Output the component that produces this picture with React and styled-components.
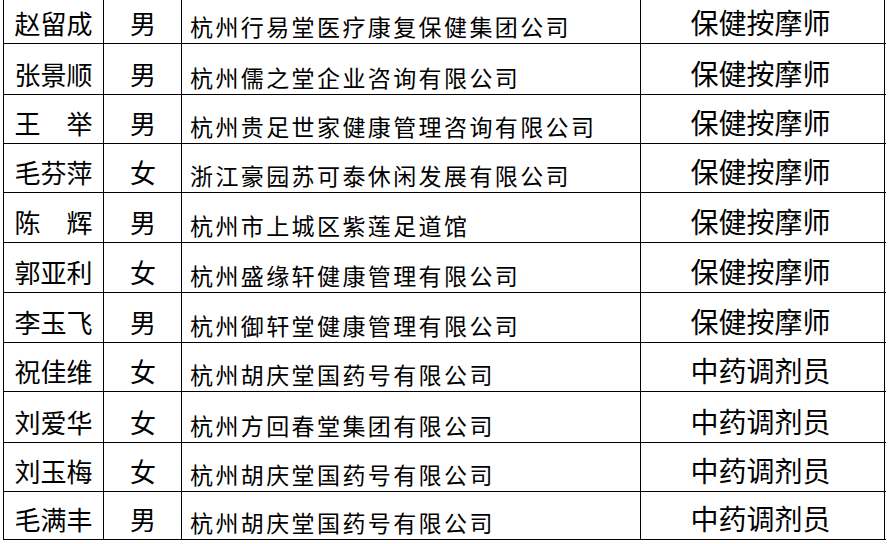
import React from "react";
import styled, { createGlobalStyle } from "styled-components";

const Global = createGlobalStyle`
  html, body { margin: 0; padding: 0; background: #fff; overflow: hidden; }
  body { font-family: "Noto Sans CJK SC", "Noto Sans", sans-serif; color: #000; }
`;

const Table = styled.div`
  margin-left: 3px;
  width: 882px;
  border-left: 1px solid #000;
  display: flex;
  flex-direction: column;
`;

const Row = styled.div`
  display: grid;
  grid-template-columns: 100px 78px 459px 244px;
  box-sizing: border-box;
  height: ${(p) => p.$h}px;
  border-bottom: 1px solid #000;
`;

const Cell = styled.div`
  box-sizing: border-box;
  border-right: 1px solid #000;
  display: flex;
  align-items: flex-end;
  justify-content: ${(p) => (p.$left ? "flex-start" : "center")};
  line-height: 1;
  white-space: pre;
  overflow: hidden;
`;

const Name = styled(Cell)`
  font-size: 26px;
  padding-bottom: 7px;
`;

const Gender = styled(Cell)`
  font-size: 26px;
  padding-bottom: 7px;
  padding-left: 1px;
`;

const Company = styled(Cell)`
  font-size: 23px;
  letter-spacing: 2.4px;
  padding-left: 8px;
  padding-bottom: 5px;
`;

const Job = styled(Cell)`
  font-size: 28px;
  padding-bottom: 7px;
  padding-right: 4px;
`;

const rows = [
  ["赵留成", "男", "杭州行易堂医疗康复保健集团公司", "保健按摩师", 44],
  ["张景顺", "男", "杭州儒之堂企业咨询有限公司", "保健按摩师", 51],
  ["王　举", "男", "杭州贵足世家健康管理咨询有限公司", "保健按摩师", 49],
  ["毛芬萍", "女", "浙江豪园苏可泰休闲发展有限公司", "保健按摩师", 49],
  ["陈　辉", "男", "杭州市上城区紫莲足道馆", "保健按摩师", 50],
  ["郭亚利", "女", "杭州盛缘轩健康管理有限公司", "保健按摩师", 50],
  ["李玉飞", "男", "杭州御轩堂健康管理有限公司", "保健按摩师", 50],
  ["祝佳维", "女", "杭州胡庆堂国药号有限公司", "中药调剂员", 49],
  ["刘爱华", "女", "杭州方回春堂集团有限公司", "中药调剂员", 51],
  ["刘玉梅", "女", "杭州胡庆堂国药号有限公司", "中药调剂员", 49],
  ["毛满丰", "男", "杭州胡庆堂国药号有限公司", "中药调剂员", 48],
];

export default function App() {
  return (
    <>
      <Global />
      <Table>
        {rows.map(([n, g, c, j, h], i) => (
          <Row key={i} $h={h}>
            <Name>{n}</Name>
            <Gender>{g}</Gender>
            <Company $left>{c}</Company>
            <Job>{j}</Job>
          </Row>
        ))}
      </Table>
    </>
  );
}
